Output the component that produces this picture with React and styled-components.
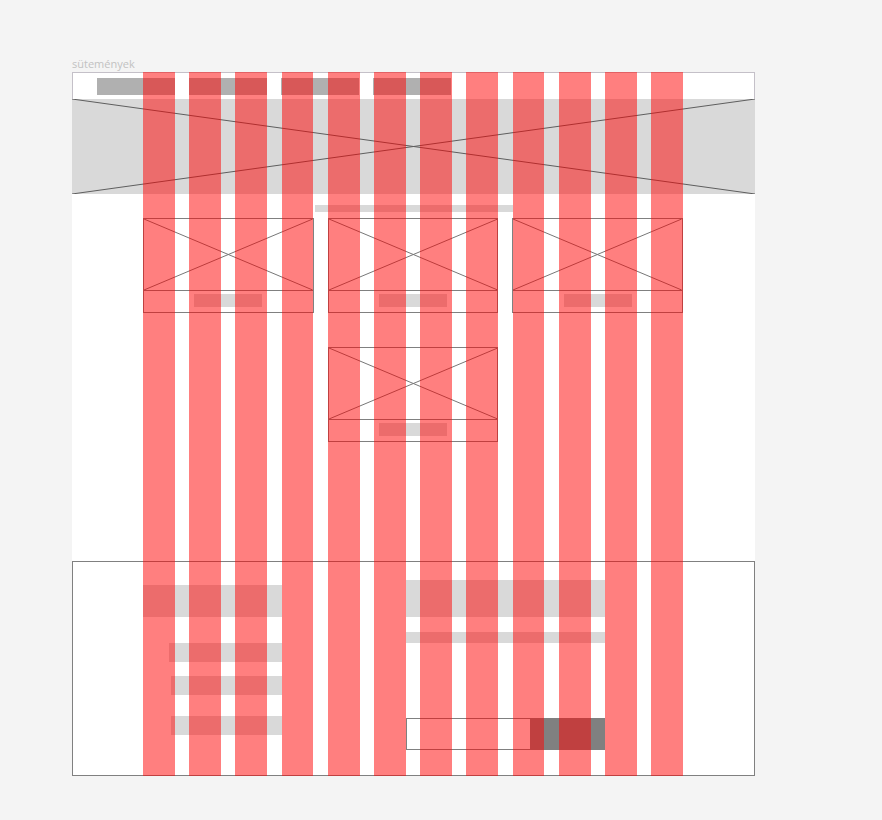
import React from "react";
import styled, { createGlobalStyle } from "styled-components";

// wireframe of the "sütemények" page with the 12 column grid laid over it

const GlobalStyle = createGlobalStyle`
  html, body {
    margin: 0;
    background: #f4f4f4;
    font-family: "Open Sans", "Liberation Sans", sans-serif;
  }
`;

const Wrapper = styled.div`
  padding: 56px 0 45px 72px;
`;

const Label = styled.div`
  font-size: 11px;
  line-height: 16px;
  color: #c2c2c2;
`;

const Page = styled.div`
  position: relative;
  width: 683px;
  background: #fff;
`;

const Nav = styled.div`
  height: 27px;
  box-sizing: border-box;
  border: 1px solid #c4c0c8;
  border-bottom: none;
  padding: 5px 0 0 24px;
  display: flex;
  gap: 14px;
`;

const NavItem = styled.div`
  width: 78px;
  height: 17px;
  background: #b0b0b0;
`;

const Hero = styled.div`
  height: 95px;
  background: #d9d9d9;
`;

const CrossSvg = styled.svg`
  display: block;
  width: 100%;
  height: 100%;
`;

const Cross = ({ color }) => (
  <CrossSvg viewBox="0 0 100 100" preserveAspectRatio="none">
    <line x1="0" y1="0" x2="100" y2="100" stroke={color} strokeWidth="1" vectorEffect="non-scaling-stroke" />
    <line x1="0" y1="100" x2="100" y2="0" stroke={color} strokeWidth="1" vectorEffect="non-scaling-stroke" />
  </CrossSvg>
);

const Subtitle = styled.div`
  width: 198px;
  height: 7px;
  margin: 11px auto 0;
  background: #d9d9d9;
`;

const Products = styled.div`
  width: 540px;
  margin: 6px 0 0 71px;
  display: grid;
  grid-template-columns: repeat(3, 1fr);
  column-gap: 14px;
  row-gap: 34px;
`;

const Card = styled.div`
  grid-column: ${(props) => props.col || "auto"};
  border: 1px solid #808080;
`;

const Thumb = styled.div`
  height: 71px;
  border-bottom: 1px solid #808080;
`;

const Caption = styled.div`
  height: 21px;
  box-sizing: border-box;
  padding-top: 3px;
  display: flex;
  justify-content: center;
`;

const CaptionBar = styled.div`
  width: 68px;
  height: 13px;
  background: #d9d9d9;
`;

const Footer = styled.div`
  margin-top: 119px;
  height: 215px;
  box-sizing: border-box;
  border: 1px solid #808080;
  padding-left: 70px;
  display: flex;
  align-items: flex-start;
`;

const FooterCol = styled.div`
  width: ${(props) => props.width}px;
  margin-left: ${(props) => props.offset || 0}px;
  padding-top: ${(props) => props.top}px;
  display: flex;
  flex-direction: column;
`;

const Block = styled.div`
  width: ${(props) => (props.indent ? `calc(100% - ${props.indent}px)` : "100%")};
  margin-left: ${(props) => props.indent || 0}px;
  margin-top: ${(props) => props.gap || 0}px;
  height: ${(props) => props.h}px;
  background: #d9d9d9;
`;

const Form = styled.div`
  margin-top: 75px;
  display: flex;
  height: 32px;
`;

const Input = styled.div`
  width: 125px;
  box-sizing: border-box;
  border: 1px solid #808080;
`;

const Button = styled.div`
  flex: 1;
  background: #808080;
`;

const GridOverlay = styled.div`
  position: absolute;
  top: 0;
  bottom: 0;
  left: 71px;
  width: 540px;
  display: grid;
  grid-template-columns: repeat(12, 1fr);
  column-gap: 14.4px;
  pointer-events: none;
`;

const GridCol = styled.div`
  background: rgba(255, 0, 0, 0.5);
`;

const products = [{}, {}, {}, { col: 2 }];

const App = () => {
  return (
    <Wrapper>
      <GlobalStyle />
      <Label>sütemények</Label>
      <Page>
        <Nav>
          {[0, 1, 2, 3].map((i) => (
            <NavItem key={i} />
          ))}
        </Nav>
        <Hero>
          <Cross color="#5e5e5e" />
        </Hero>
        <Subtitle />
        <Products>
          {products.map((p, i) => (
            <Card key={i} col={p.col}>
              <Thumb>
                <Cross color="#777" />
              </Thumb>
              <Caption>
                <CaptionBar />
              </Caption>
            </Card>
          ))}
        </Products>
        <Footer>
          <FooterCol width={139} top={23}>
            <Block h={32} />
            <Block h={19} gap={26} indent={26} />
            <Block h={19} gap={14} indent={28} />
            <Block h={19} gap={21} indent={28} />
          </FooterCol>
          <FooterCol width={199} offset={124} top={18}>
            <Block h={37} />
            <Block h={11} gap={15} />
            <Form>
              <Input />
              <Button />
            </Form>
          </FooterCol>
        </Footer>
        <GridOverlay>
          {Array.from({ length: 12 }).map((_, i) => (
            <GridCol key={i} />
          ))}
        </GridOverlay>
      </Page>
    </Wrapper>
  );
};

export default App;
